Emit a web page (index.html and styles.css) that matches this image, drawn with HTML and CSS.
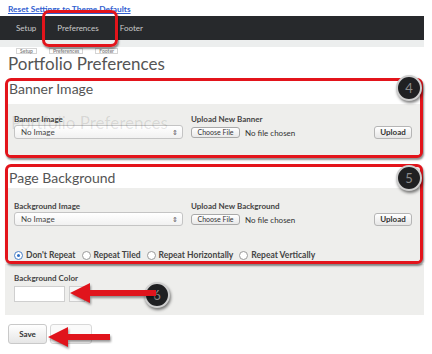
FILE: index.html
```html
<!DOCTYPE html>
<html lang="en">
<head>
    <meta charset="UTF-8">
    <meta name="viewport" content="width=device-width, initial-scale=1.0">
    <title>Portfolio Preferences</title>
    <link rel="stylesheet" href="styles.css">
</head>
<body>
    <div class="page">
        <div class="toplinks"><a href="#">Reset Settings to Theme Defaults</a></div>
        <div class="navbar">
            <a href="#">Setup</a>
            <a href="#" class="active">Preferences</a>
            <a href="#">Footer</a>
        </div>
        <div class="nav-strip"></div>
        <div class="subtabs">
            <span>Setup</span>
            <span>Preferences</span>
            <span>Footer</span>
        </div>
        <h1 class="page-title">Portfolio Preferences</h1>

        <div class="callout banner">
            <h2 class="section-title">Banner Image</h2>
            <div class="panel">
                <div class="field">
                    <label>Banner Image</label>
                    <div class="select">No Image <span class="select-arrow">&#8661;</span></div>
                </div>
                <div class="field">
                    <label>Upload New Banner</label>
                    <div class="upload-row">
                        <span class="file-btn">Choose File</span>
                        <span class="file-name">No file chosen</span>
                        <span class="btn upload-btn">Upload</span>
                    </div>
                </div>
            </div>
            <div class="ghost-title">Portfolio Preferences</div>
        </div>

        <div class="callout background">
            <h2 class="section-title">Page Background</h2>
            <div class="panel">
                <div class="field">
                    <label>Background Image</label>
                    <div class="select">No Image <span class="select-arrow">&#8661;</span></div>
                </div>
                <div class="field">
                    <label>Upload New Background</label>
                    <div class="upload-row">
                        <span class="file-btn">Choose File</span>
                        <span class="file-name">No file chosen</span>
                        <span class="btn upload-btn">Upload</span>
                    </div>
                </div>
                <div class="radios">
                    <span class="radio checked"></span><span class="radio-label">Don't Repeat</span>
                    <span class="radio"></span><span class="radio-label">Repeat Tiled</span>
                    <span class="radio"></span><span class="radio-label">Repeat Horizontally</span>
                    <span class="radio"></span><span class="radio-label">Repeat Vertically</span>
                </div>
            </div>
        </div>

        <div class="color-panel">
            <label>Background Color</label>
            <div class="color-row">
                <span class="color-input"></span>
                <span class="color-swatch"></span>
            </div>
        </div>

        <div class="actions">
            <span class="btn save-btn">Save</span>
            <span class="btn ghost-btn"></span>
        </div>

        <!-- tutorial annotations -->
        <div class="mark tab-mark"></div>
        <div class="step step-4">4</div>
        <div class="step step-5">5</div>
        <div class="step step-6">6</div>
        <svg class="arrow arrow-color" width="90" height="24" viewBox="0 0 90 24">
            <path d="M2 12 L22 2 L22 9 L88 9 L88 15 L22 15 L22 22 Z" fill="#e0141c"/>
        </svg>
        <svg class="arrow arrow-save" width="66" height="24" viewBox="0 0 66 24">
            <path d="M2 12 L22 2 L22 9 L64 9 L64 15 L22 15 L22 22 Z" fill="#e0141c"/>
        </svg>
    </div>
</body>
</html>
```

FILE: styles.css
```css
body {
    margin: 0;
    background-color: #fff;
    font-family: Lato, "Open Sans", sans-serif;
    color: #333;
}
.page {
    position: relative;
    width: 432px;
    height: 354px;
    overflow: hidden;
}
.toplinks {
    height: 16px;
    padding-left: 8px;
    box-sizing: border-box;
    padding-top: 3px;
    font-size: 8.3px;
    line-height: 12px;
}
.toplinks a {
    color: #3160d0;
    font-weight: bold;
}
.navbar {
    width: 424px;
    height: 24px;
    background-color: #27292c;
    display: flex;
    align-items: center;
    padding-left: 16px;
    box-sizing: border-box;
    gap: 21px;
}
.navbar a {
    color: #c9cacb;
    font-size: 8px;
    text-decoration: none;
}
.nav-strip {
    width: 424px;
    height: 7px;
    background-color: #eceeee;
}
.subtabs {
    display: flex;
    gap: 12px;
    padding-left: 16px;
    height: 6px;
    margin-top: 1px;
}
.subtabs span {
    background-color: #fff;
    border: 1px solid #d5d5d5;
    font-size: 5px;
    line-height: 5px;
    color: #888;
    font-weight: bold;
    padding: 0 3px;
}
.page-title {
    margin: 0 0 0 8px;
    font-size: 17px;
    line-height: 20px;
    font-weight: 400;
    color: #555;
    height: 24px;
}
.callout {
    position: relative;
    width: 418px;
    margin-left: 5px;
    border: 3px solid #e3141b;
    border-radius: 6px;
    box-sizing: border-box;
    box-shadow: 1px 2px 2px rgba(0, 0, 0, 0.45);
    overflow: hidden;
    background-color: #fff;
    display: flex;
    flex-direction: column;
}
.banner {
    height: 80px;
}
.background {
    height: 100px;
    margin-top: 6px;
}
.section-title {
    margin: 0;
    padding-left: 1px;
    font-size: 14px;
    line-height: 16px;
    font-weight: 400;
    color: #555;
    flex: none;
}
.banner .section-title {
    height: 23px;
}
.background .section-title {
    height: 21px;
    padding-top: 3px;
    box-sizing: border-box;
}
.panel {
    flex: 1;
    background-color: #eeeeec;
    display: grid;
    grid-template-columns: 169px 225px;
    align-content: start;
    column-gap: 8px;
    padding: 10px 0 0 6px;
    box-sizing: border-box;
}
.background .panel {
    padding-top: 13px;
}
.field label,
.color-panel label {
    display: block;
    font-size: 8px;
    line-height: 10px;
    font-weight: bold;
    color: #444;
}
.select {
    margin-top: 1px;
    height: 14px;
    border: 1px solid #c4c4c4;
    border-radius: 3px;
    background: linear-gradient(#fff, #f1f1f1);
    box-sizing: border-box;
    font-size: 8px;
    line-height: 12px;
    padding-left: 6px;
    color: #444;
    position: relative;
}
.select-arrow {
    position: absolute;
    right: 4px;
    top: 0;
    font-size: 7px;
    color: #555;
}
.upload-row {
    display: flex;
    align-items: center;
    margin-top: 2px;
}
.file-btn {
    width: 49px;
    height: 11px;
    border: 1px solid #a9a9a9;
    border-radius: 3px;
    background: linear-gradient(#fff, #e9e9e9);
    box-sizing: border-box;
    font-size: 7px;
    line-height: 9px;
    text-align: center;
    color: #333;
}
.file-name {
    margin-left: 5px;
    font-size: 8px;
    color: #333;
}
.btn {
    border: 1px solid #b5b5b5;
    border-radius: 3px;
    background: linear-gradient(#fff, #e6e6e6);
    box-sizing: border-box;
    font-weight: bold;
    color: #333;
    text-align: center;
}
.upload-btn {
    margin-left: auto;
    margin-right: 4px;
    width: 38px;
    height: 13px;
    font-size: 8px;
    line-height: 11px;
}
.radios {
    grid-column: 1 / 3;
    display: flex;
    align-items: center;
    margin-top: 24px;
    height: 10px;
}
.radio {
    width: 9px;
    height: 9px;
    border: 1px solid #9a9a9a;
    border-radius: 50%;
    background-color: #fff;
    box-sizing: border-box;
    margin-right: 3px;
    position: relative;
}
.radio.checked {
    border-color: #4a80c8;
}
.radio.checked::after {
    content: "";
    position: absolute;
    left: 2px;
    top: 2px;
    width: 3px;
    height: 3px;
    border-radius: 50%;
    background-color: #2f6fc4;
}
.radio-label {
    font-size: 8.5px;
    font-weight: bold;
    color: #444;
    margin-right: 6px;
}
.color-panel {
    margin-left: 5px;
    width: 419px;
    height: 51px;
    background-color: #eeeeec;
    padding: 9px 0 0 9px;
    box-sizing: border-box;
}
.color-row {
    display: flex;
    gap: 4px;
    margin-top: 3px;
}
.color-input {
    width: 49px;
    height: 14px;
    border: 1px solid #cfcfcf;
    background-color: #fff;
}
.color-swatch {
    width: 14px;
    height: 14px;
    border: 1px solid #cfcfcf;
    background-color: #f6f6f6;
}
.actions {
    display: flex;
    gap: 3px;
    padding: 9px 0 0 8px;
}
.save-btn {
    width: 39px;
    height: 20px;
    font-size: 8px;
    line-height: 18px;
    border-color: #c9c9c9;
}
.ghost-btn {
    width: 42px;
    height: 20px;
    border-color: #d8d8d8;
    background: #fafafa;
}
.ghost-title {
    position: absolute;
    left: 3px;
    top: 31px;
    font-size: 17px;
    color: rgba(0, 0, 0, 0.1);
}
.mark {
    position: absolute;
    border: 3px solid #e3141b;
    border-radius: 7px;
    box-shadow: 1px 2px 2px rgba(0, 0, 0, 0.45);
}
.tab-mark {
    left: 42px;
    top: 10px;
    width: 76px;
    height: 37px;
    box-sizing: border-box;
}
.step {
    position: absolute;
    width: 26px;
    height: 26px;
    border-radius: 50%;
    background-color: #1f2022;
    border: 2px solid #cfcfcf;
    box-sizing: border-box;
    box-shadow: 1px 2px 3px rgba(0, 0, 0, 0.5);
    color: #8b8b8b;
    font-size: 13px;
    line-height: 22px;
    text-align: center;
}
.step-4 {
    left: 396px;
    top: 75px;
}
.step-5 {
    left: 396px;
    top: 165px;
}
.step-6 {
    left: 144px;
    top: 282px;
}
.arrow {
    position: absolute;
    filter: drop-shadow(1px 2px 1px rgba(0, 0, 0, 0.4));
}
.arrow-color {
    left: 68px;
    top: 281px;
}
.arrow-save {
    left: 46px;
    top: 325px;
}
```
